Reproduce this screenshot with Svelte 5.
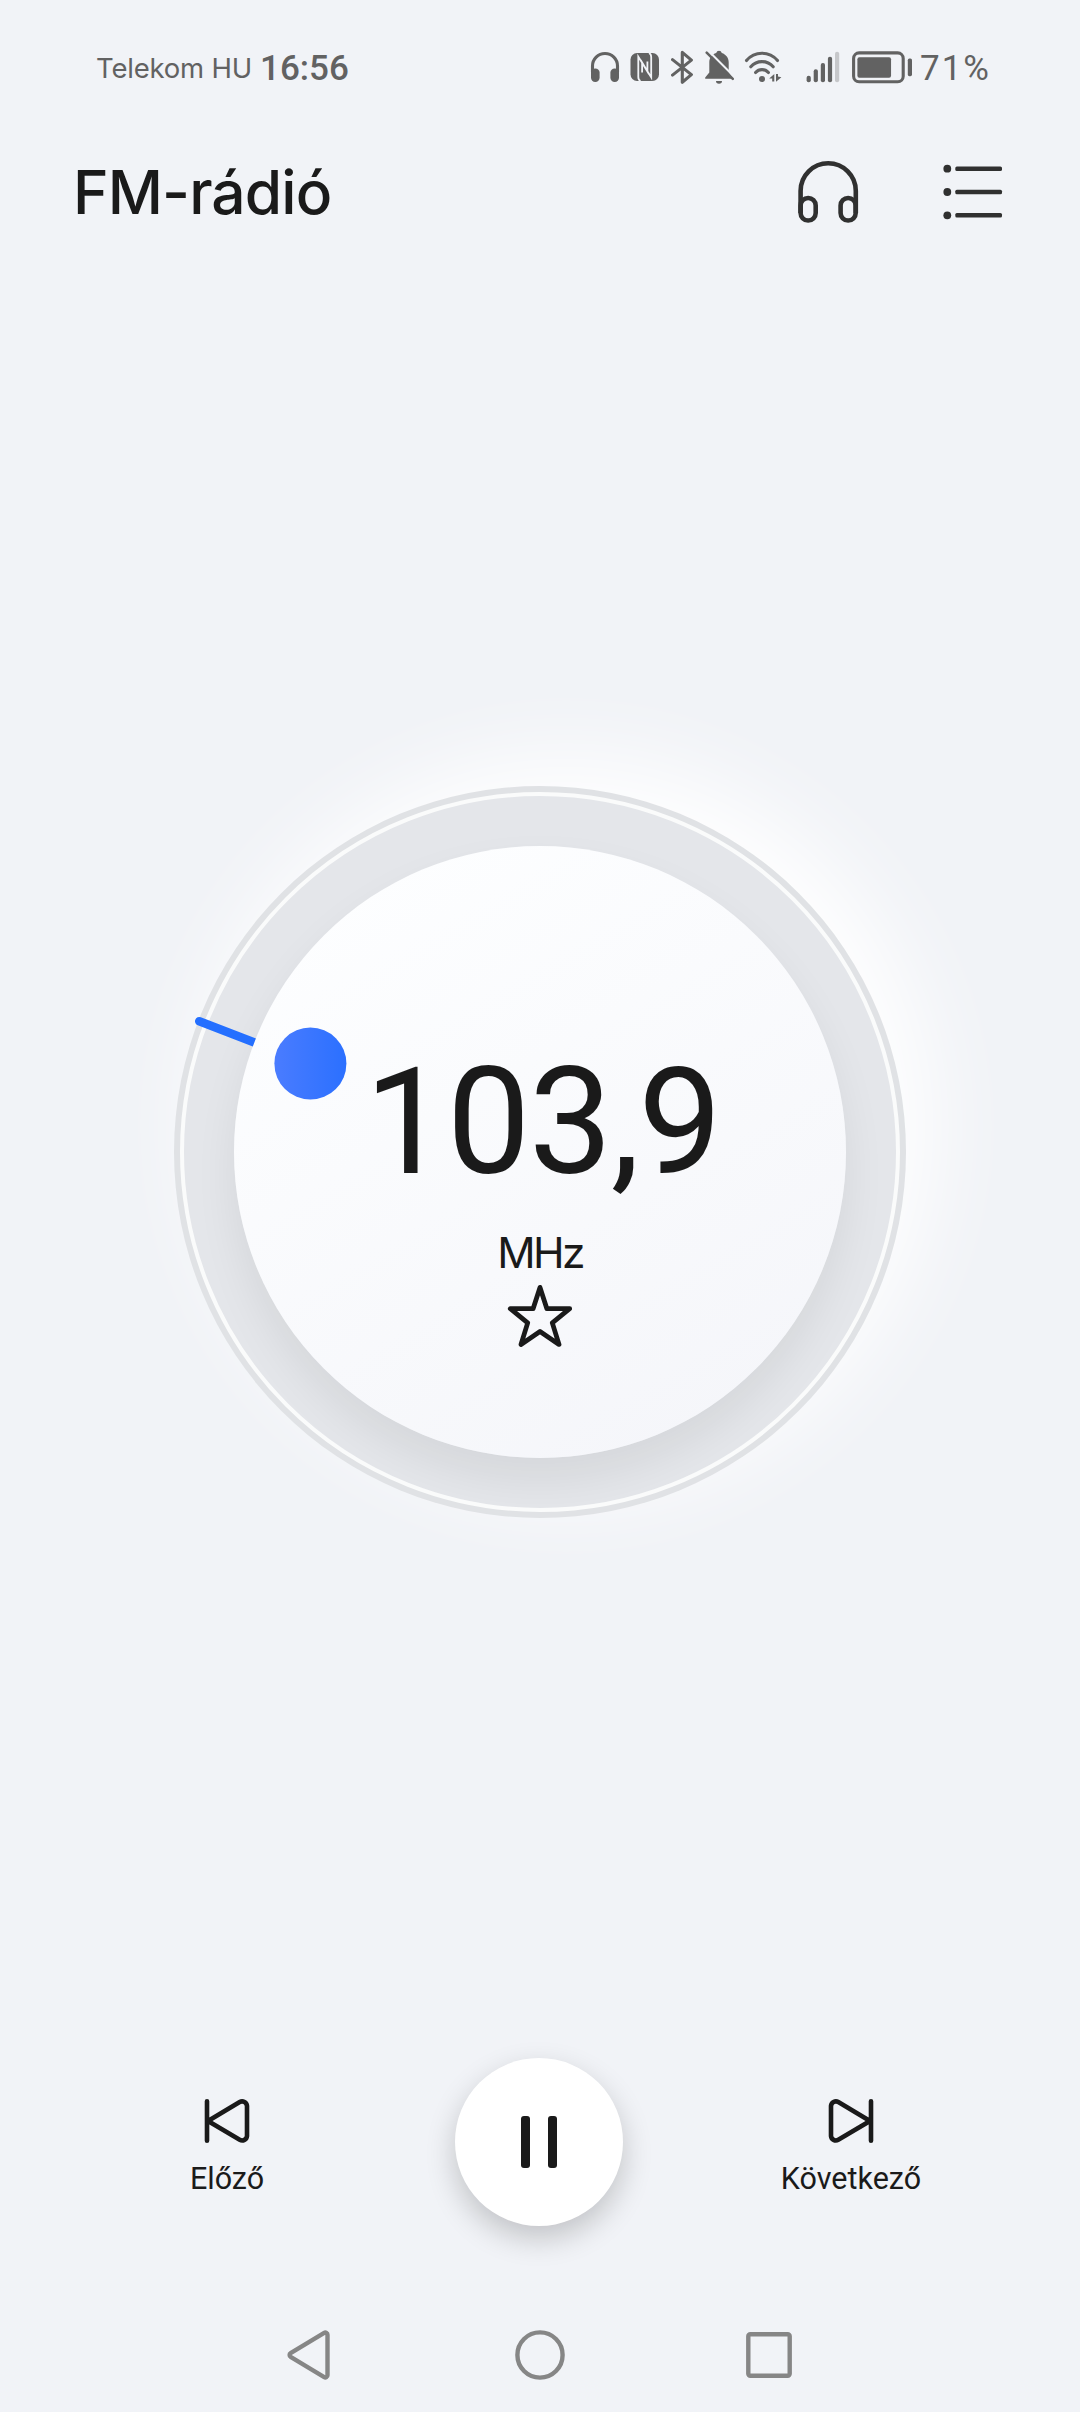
<script>
  let frequency = $state(103.9);
  let playing = $state(true);
  let favourite = $state(false);

  const carrier = 'Telekom HU';
  const clock = '16:56';
  const battery = 71;
  const signal = [25.7, 19.3, 13, 6.7, 1.7];

  let display = $derived(frequency.toFixed(1).replace('.', ','));

  function step(amount) {
    frequency = Math.min(108, Math.max(87.5, frequency + amount));
  }
</script>

<div class="screen">
  <div class="status">
    <span class="carrier">{carrier}</span>
    <span class="clock">{clock}</span>

    <div class="status-icons">
      <svg width="30" height="36" viewBox="0 0 30 36">
        <path class="line" d="M2.5 22V16A12.5 12.5 0 0 1 27.5 16V22" />
        <rect x="1" y="18.4" width="8.6" height="13.6" rx="4.2" />
        <rect x="20.4" y="18.4" width="8.6" height="13.6" rx="4.2" />
      </svg>
      <svg width="31" height="36" viewBox="0 0 31 36">
        <rect x="0.5" y="3" width="28.5" height="28" rx="6.5" />
        <path class="cut" d="M10.5 31Q8.3 30 8.3 27V6.6L17.4 21.5V11.5M19 3Q21.2 4 21.2 7V27.4L12.1 12.5V22.5" />
      </svg>
      <svg width="23" height="36" viewBox="0 0 23 36">
        <path class="line" d="M1.5 9.6L20.4 24.6L11.3 32.3V2.4L20.4 10.1L1.5 25.1" />
      </svg>
      <svg width="30" height="36" viewBox="0 0 30 36">
        <path d="M15 .8A3 3 0 0 1 17.8 3C22 4.3 24.7 8 24.7 12.5V22L29 28.8H1.2V27.4L5.3 22.5V12.5C5.3 8 8 4.3 12.2 3A3 3 0 0 1 15 .8Z" />
        <path d="M12 31H18A3 2.8 0 0 1 12 31Z" />
        <path class="cut wide" d="M4 0.5L32 28.5" />
        <path class="line thin" d="M2.7 2.7L28.8 28.9" />
      </svg>
      <svg width="38" height="36" viewBox="0 0 38 36">
        <path class="line" d="M2.5 10.5A20.1 20.1 0 0 1 33.5 10.5M6.8 16.8A14.8 14.8 0 0 1 29.2 16.8M11.6 22.5A8.5 8.5 0 0 1 24.4 22.5" />
        <circle cx="18" cy="29" r="3" />
        <path d="M25.2 28.6L30.3 23.9V31.6H28.2V28.6ZM32 24H34V26.4L37.4 27.3L32 31.8Z" />
      </svg>
      <svg class="signal" width="36" height="36" viewBox="0 0 36 36">
        {#each signal as top, i}
          <rect class:off={i === 4} x={0.6 + i * 7.1} y={top} width="4.2" height={32.2 - top} rx="2" />
        {/each}
      </svg>
      <svg width="60" height="36" viewBox="0 0 60 36">
        <rect class="line" x="1.6" y="2.9" width="49.6" height="28.8" rx="5.5" />
        <rect x="5.4" y="7.2" width={battery * 0.474} height="20.5" rx="2" />
        <rect x="55.8" y="8.6" width="4.2" height="17.6" rx="1.6" />
      </svg>
    </div>
    <span class="percent">{battery}%</span>
  </div>

  <header>
    <h1>FM-rádió</h1>
    <button aria-label="Fejhallgató">
      <svg width="72" height="72" viewBox="0 0 72 72">
        <path class="line" d="M8.6 57V34.9A27.6 27.6 0 0 1 63.8 34.9V57" />
        <rect class="line" x="8.6" y="42" width="15.1" height="22.5" rx="7.5" />
        <rect class="line" x="48.6" y="42" width="15.1" height="22.5" rx="7.5" />
      </svg>
    </button>
    <button aria-label="Csatornák">
      <svg width="72" height="72" viewBox="0 0 72 72">
        {#each [12.7, 36, 59.3] as y}
          <circle cx="11.3" cy={y} r="3.9" />
          <rect x="19.3" y={y - 2.3} width="46.7" height="4.6" rx="1.6" />
        {/each}
      </svg>
    </button>
  </header>

  <main>
    <div class="dial">
      <div class="track">
        <div class="disc">
          <div class="frequency">{display}</div>
          <div class="unit">MHz</div>
          <button aria-label="Kedvenc" onclick={() => (favourite = !favourite)}>
            <svg class="star" class:filled={favourite} width="72" height="72" viewBox="0 0 72 72">
              <path d="M36 7.4L42.9 28.7H65.7L48.3 42.9L55 64.4L36 51.4L17 64.4L23.7 42.9L6.3 28.7H29.1Z" />
            </svg>
          </button>
        </div>
      </div>
      <svg class="pointer" width="732" height="732" viewBox="0 0 732 732">
        <defs>
          <linearGradient id="knob">
            <stop offset="0" stop-color="#4a7cff" />
            <stop offset="1" stop-color="#2b70ff" />
          </linearGradient>
          <clipPath id="outside">
            <path clip-rule="evenodd" d="M0 0H732V732H0ZM60 366A306 306 0 0 0 672 366A306 306 0 0 0 60 366Z" />
          </clipPath>
        </defs>
        <path class="tick" clip-path="url(#outside)" d="M25.3 235.3L85 258.2" />
        <circle cx="136.4" cy="277.6" r="36" fill="url(#knob)" />
      </svg>
    </div>
  </main>

  <div class="controls">
    <button class="skip" onclick={() => step(-0.1)}>
      <svg width="72" height="72" viewBox="0 0 72 72">
        <path d="M16 16.2V55.8M17 35.9L48.7 17A4.9 4.9 0 0 1 56 21V51A4.9 4.9 0 0 1 48.7 54.8Z" />
      </svg>
      <span>Előző</span>
    </button>
    <button class="play" aria-label={playing ? 'Szünet' : 'Lejátszás'} onclick={() => (playing = !playing)}>
      <svg width="72" height="72" viewBox="0 0 72 72">
        {#if playing}
          <rect x="18" y="10" width="9" height="52" rx="3" />
          <rect x="45" y="10" width="9" height="52" rx="3" />
        {:else}
          <path d="M22 12L58 36L22 60Z" />
        {/if}
      </svg>
    </button>
    <button class="skip" onclick={() => step(0.1)}>
      <svg width="72" height="72" viewBox="0 0 72 72">
        <path d="M56 16.2V55.8M55 35.9L23.3 17A4.9 4.9 0 0 0 16 21V51A4.9 4.9 0 0 0 23.3 54.8Z" />
      </svg>
      <span>Következő</span>
    </button>
  </div>

  <nav>
    <svg width="72" height="72" viewBox="0 0 72 72">
      <path d="M15.6 34.2L49.2 13.9A2.2 2.2 0 0 1 52.5 15.8V56.2A2.2 2.2 0 0 1 49.2 58.1L15.6 37.8A2.1 2.1 0 0 1 15.6 34.2Z" />
    </svg>
    <svg width="72" height="72" viewBox="0 0 72 72">
      <circle cx="36" cy="36" r="22.6" />
    </svg>
    <svg width="72" height="72" viewBox="0 0 72 72">
      <rect x="15.3" y="15.3" width="41.4" height="41.4" rx="2" />
    </svg>
  </nav>
</div>

<style>
  :global(body) {
    background: #f1f3f7;
  }

  .screen {
    display: flex;
    flex-direction: column;
    height: 2412px;
    overflow: hidden;
    background: #f1f3f7;
    color: #1a1a1a;
    font-family: Roboto, sans-serif;
  }

  svg {
    display: block;
  }

  button {
    padding: 0;
    border: 0;
    background: none;
    color: inherit;
    font: inherit;
    cursor: pointer;
  }

  .status {
    display: flex;
    align-items: center;
    height: 136px;
    padding: 0 90px 0 96px;
    color: #626262;
    fill: #626262;
    white-space: nowrap;
  }

  .carrier {
    width: 164px;
    font-family: Inter, sans-serif;
    font-size: 27.5px;
    letter-spacing: -0.2px;
  }

  .clock, .percent {
    font-size: 35px;
    font-weight: 500;
  }

  .status-icons {
    display: flex;
    gap: 10px;
    width: 322px;
    margin-left: auto;
    margin-right: 8px;
  }

  .status-icons .line {
    fill: none;
    stroke: #626262;
    stroke-width: 3.1;
    stroke-linecap: round;
    stroke-linejoin: round;
  }

  .status-icons .thin { stroke-width: 2.5; }

  .cut {
    fill: none;
    stroke: #f1f3f7;
    stroke-width: 1.8;
  }

  .wide { stroke-width: 2.2; }
  .signal { margin-left: 14px; }
  .off { fill: #c6c7ca; }

  .percent {
    width: 70px;
    font-weight: 400;
    letter-spacing: 2px;
  }

  header {
    display: flex;
    align-items: center;
    gap: 72px;
    height: 112px;
    padding: 0 72px;
  }

  h1 {
    margin: 0 auto 0 1px;
    font-family: Inter, sans-serif;
    font-size: 60.5px;
    font-weight: 500;
    line-height: 72px;
    letter-spacing: -0.9px;
  }

  header svg { fill: #303030; }

  header .line {
    fill: none;
    stroke: #303030;
    stroke-width: 4.6;
  }

  main {
    display: grid;
    place-items: center;
    height: 1808px;
  }

  .dial {
    position: relative;
    box-sizing: border-box;
    width: 732px;
    height: 732px;
    padding: 6px;
    border-radius: 50%;
    background: #e0e2e5;
    box-shadow: 26px -26px 90px #fff;
  }

  .track {
    box-sizing: border-box;
    width: 720px;
    height: 720px;
    padding: 50px;
    border: 4px solid #fafbfb;
    border-radius: 50%;
    background: #e4e6ea;
    overflow: hidden;
  }

  .disc {
    display: flex;
    flex-direction: column;
    align-items: center;
    box-sizing: border-box;
    width: 612px;
    height: 612px;
    padding-top: 201px;
    border-radius: 50%;
    background: linear-gradient(150deg, #fdfeff 10%, #f5f6fa 90%);
    box-shadow: 0 22px 44px rgba(0, 0, 0, 0.065);
  }

  .frequency {
    padding-left: 5px;
    font-size: 149px;
    line-height: 150px;
    letter-spacing: -1.7px;
  }

  .unit {
    margin-top: 29px;
    font-family: Inter, sans-serif;
    font-size: 42.5px;
    line-height: 54px;
    letter-spacing: -2.6px;
  }

  .star {
    fill: none;
    stroke: #1a1a1a;
    stroke-width: 4.8;
    stroke-linejoin: round;
  }

  .star.filled { fill: #1a1a1a; }

  .pointer {
    position: absolute;
    inset: 0;
    pointer-events: none;
  }

  .tick {
    stroke: #246fff;
    stroke-width: 8.6;
    stroke-linecap: round;
  }

  .controls {
    display: grid;
    grid-template-columns: repeat(3, 312px);
    place-items: center;
    height: 172px;
    padding-left: 71px;
  }

  .skip {
    display: flex;
    flex-direction: column;
    align-items: center;
    gap: 3px;
    padding-bottom: 1px;
    font-size: 30.5px;
    line-height: 38px;
  }

  .skip svg {
    fill: none;
    stroke: #1a1a1a;
    stroke-width: 4.6;
    stroke-linecap: round;
    stroke-linejoin: round;
  }

  .play {
    display: grid;
    place-items: center;
    width: 168px;
    height: 168px;
    border-radius: 50%;
    background: #fff;
    fill: #1a1a1a;
    box-shadow: 0 12px 30px rgba(0, 0, 0, 0.2);
  }

  nav {
    display: flex;
    justify-content: center;
    align-items: center;
    gap: 157px;
    height: 114px;
    margin-top: auto;
    fill: none;
    stroke: #868686;
    stroke-width: 4.4;
  }
</style>
